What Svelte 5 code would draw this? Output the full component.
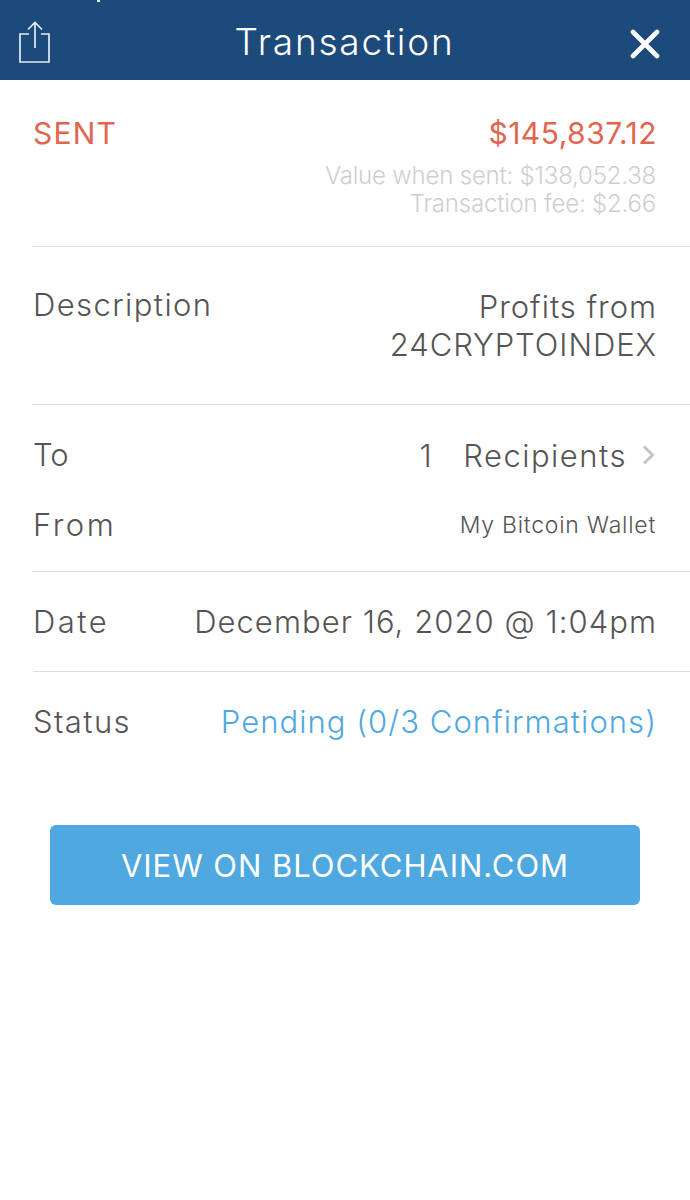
<script>
  const rows = [
    { label: 'Date', value: 'December 16, 2020 @ 1:04pm' }
  ];
</script>

<div class="screen">
  <header class="topbar">
    <span class="speck"></span>
    <svg class="share" viewBox="0 0 32 42" width="32" height="42" fill="none" stroke="#e4ecf4" stroke-width="1.7">
      <path d="M10 13H1v28h29V13h-8" />
      <path d="M16 27V1.5M9 8.5l7-7 7 7" />
    </svg>
    <h1>Transaction</h1>
    <svg class="close" viewBox="0 0 30 30" width="30" height="30" stroke="#fff" stroke-width="4.6" stroke-linecap="round">
      <path d="M3 3l24 24M27 3L3 27" />
    </svg>
  </header>

  <section class="sent row">
    <div class="sent-label">SENT</div>
    <div class="amounts">
      <div class="amount">$145,837.12</div>
      <div class="muted">Value when sent: $138,052.38</div>
      <div class="muted">Transaction fee: $2.66</div>
    </div>
  </section>

  <section class="row desc">
    <div class="label">Description</div>
    <div class="value two-line">Profits from<br />24CRYPTOINDEX</div>
  </section>

  <section class="row parties">
    <div class="line">
      <div class="label short">To</div>
      <div class="recipients">
        <span class="count">1</span>
        <span>Recipients</span>
        <svg viewBox="0 0 12 20" width="12" height="20" fill="none" stroke="#c4c4c4" stroke-width="3">
          <path d="M2 1.5l8.5 8.5-8.5 8.5" />
        </svg>
      </div>
    </div>
    <div class="line from">
      <div class="label wide">From</div>
      <div class="wallet">My Bitcoin Wallet</div>
    </div>
  </section>

  {#each rows as row}
    <section class="row single">
      <div class="label wide">{row.label}</div>
      <div class="value">{row.value}</div>
    </section>
  {/each}

  <section class="row single last">
    <div class="label">Status</div>
    <div class="value pending">Pending (0/3 Confirmations)</div>
  </section>

  <button class="cta">VIEW ON BLOCKCHAIN.COM</button>
</div>

<style>
  :global(body) {
    margin: 0;
    background: #fff;
  }

  .screen {
    width: 690px;
    height: 1200px;
    overflow: hidden;
    background: #fff;
    font-family: Inter, "Open Sans", sans-serif;
    font-weight: 300;
    color: #555;
  }

  .topbar {
    position: relative;
    height: 80px;
    background: #1c4a7b;
    display: flex;
    align-items: center;
    justify-content: space-between;
    padding: 0 30px 0 19px;
    box-sizing: border-box;
  }

  /* bottom of a status bar letter, cut off by the top of the shot */
  .speck {
    position: absolute;
    top: 0;
    left: 97px;
    width: 3px;
    height: 2px;
    background: #dfe7ef;
  }

  .topbar h1 {
    margin: 2px 0 0 8px;
    font-size: 37px;
    font-weight: 300;
    color: #fff;
    letter-spacing: 1.8px;
  }

  .share {
    margin-top: 3px;
  }

  .close {
    margin-top: 8px;
  }

  .row {
    margin-left: 33px;
    padding-right: 33px;
    border-bottom: 1px solid #ddd;
    display: flex;
    justify-content: space-between;
    align-items: flex-start;
  }

  .sent {
    height: 167px;
    padding-top: 34px;
    box-sizing: border-box;
  }

  .sent-label,
  .amount {
    color: #e0664f;
    font-size: 30px;
    font-weight: 400;
    line-height: 38px;
  }

  .sent-label {
    letter-spacing: 1.2px;
  }

  .amounts {
    text-align: right;
  }

  .amount {
    margin-bottom: 10px;
    letter-spacing: 0.5px;
  }

  .muted {
    margin-right: 1px;
    color: #cfcfcf;
    font-size: 24px;
    line-height: 28px;
    letter-spacing: -0.2px;
  }

  .label,
  .value {
    font-size: 31px;
    line-height: 38px;
    letter-spacing: 1.05px;
  }

  .label {
    letter-spacing: 1.4px;
  }

  .label.short {
    letter-spacing: 0;
  }

  .label.wide {
    letter-spacing: 2.5px;
  }

  .value {
    text-align: right;
  }

  .two-line {
    margin-top: 2px;
    letter-spacing: 0.95px;
  }

  .desc {
    height: 158px;
    box-sizing: border-box;
    padding-top: 39px;
  }

  .parties {
    display: block;
    height: 167px;
    box-sizing: border-box;
    padding-top: 31px;
  }

  .line {
    display: flex;
    justify-content: space-between;
    align-items: center;
  }

  .from {
    margin-top: 32px;
  }

  .recipients {
    display: flex;
    align-items: center;
    font-size: 31px;
    letter-spacing: 1.5px;
  }

  .count {
    margin-right: 30px;
  }

  .recipients svg {
    margin: 0 3px 0 15px;
  }

  .wallet {
    margin-right: 1px;
    font-size: 23px;
    letter-spacing: 0.75px;
  }

  .single {
    height: 100px;
    box-sizing: border-box;
    padding-top: 31px;
  }

  .last {
    border-bottom: none;
  }

  .pending {
    color: #4fa8df;
  }

  .cta {
    display: block;
    width: 590px;
    height: 80px;
    margin: 53px 0 0 50px;
    border: none;
    border-radius: 6px;
    background: #4fa8df;
    color: #fff;
    font-family: inherit;
    font-weight: 400;
    font-size: 31px;
    letter-spacing: 0.95px;
  }
</style>
